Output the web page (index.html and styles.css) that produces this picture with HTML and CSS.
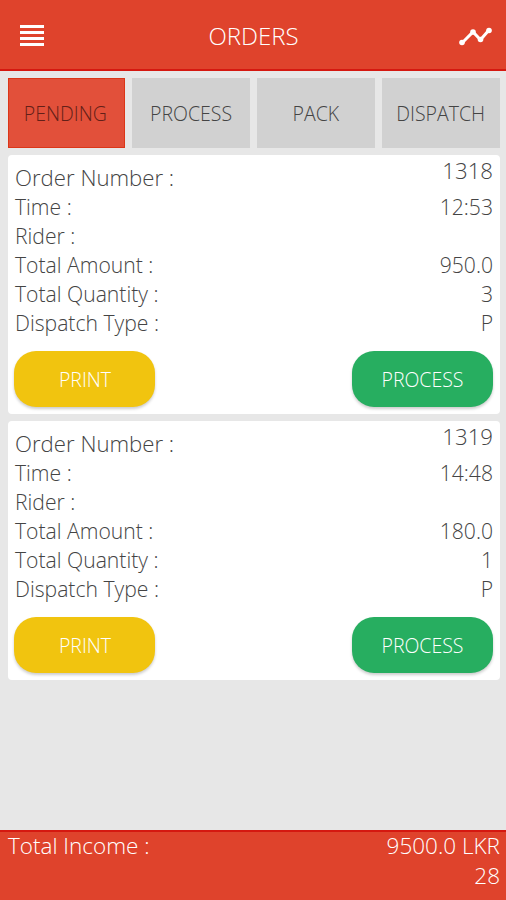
FILE: index.html
```html
<!DOCTYPE html>
<html lang="en">
<head>
<meta charset="utf-8">
<title>Orders</title>
<link rel="stylesheet" href="styles.css">
</head>
<body>
<header class="bar">
  <svg class="menu" viewBox="0 0 24 22"><path d="M0 1.500h24M0 7.500h24M0 13.500h24M0 19.500h24"/></svg>
  <h1>ORDERS</h1>
  <svg class="chart" viewBox="0 0 34 22"><path d="M3 18L14 7L21.500 14.800L30 5"/><circle cx="3" cy="17.500" r="2.800"/><circle cx="14" cy="7" r="2.800"/><circle cx="21.500" cy="14.500" r="2.800"/><circle cx="30" cy="5.500" r="2.800"/></svg>
</header>
<nav class="tabs">
  <button class="tab active"><span>PENDING</span></button>
  <button class="tab"><span>PROCESS</span></button>
  <button class="tab"><span>PACK</span></button>
  <button class="tab"><span>DISPATCH</span></button>
</nav>
<main>
  <section class="card">
    <div class="row first"><span>Order Number :</span><span class="value">1318</span></div>
    <div class="row"><span>Time :</span><span>12:53</span></div>
    <div class="row"><span>Rider :</span></div>
    <div class="row"><span>Total Amount :</span><span>950.0</span></div>
    <div class="row"><span>Total Quantity :</span><span>3</span></div>
    <div class="row"><span>Dispatch Type :</span><span>P</span></div>
    <div class="actions"><button class="action print">PRINT</button><button class="action process">PROCESS</button></div>
  </section>
  <section class="card">
    <div class="row first"><span>Order Number :</span><span class="value">1319</span></div>
    <div class="row"><span>Time :</span><span>14:48</span></div>
    <div class="row"><span>Rider :</span></div>
    <div class="row"><span>Total Amount :</span><span>180.0</span></div>
    <div class="row"><span>Total Quantity :</span><span>1</span></div>
    <div class="row"><span>Dispatch Type :</span><span>P</span></div>
    <div class="actions"><button class="action print">PRINT</button><button class="action process">PROCESS</button></div>
  </section>
</main>
<footer>
  <div class="total"><span>Total Income :</span><span>9500.0 LKR</span></div>
  <div class="total end"><span>28</span></div>
</footer>
</body>
</html>
```
FILE: styles.css
```css
* { box-sizing: border-box; }
body {
  margin: 0;
  height: 900px;
  display: flex;
  flex-direction: column;
  overflow: hidden;
  background: #e7e7e7;
  color: #444;
  font-family: "Open Sans", sans-serif;
  font-weight: 300;
}
.bar {
  height: 71px;
  flex: none;
  display: flex;
  align-items: center;
  justify-content: space-between;
  padding: 3px 13px 0 20px;
  background: #df432c;
  border-bottom: 2px solid #d51810;
  color: #fff;
}
h1 { margin: 0 0 0 4px; font-size: 24px; font-weight: 300; line-height: 32px; }
.menu { width: 24px; height: 22px; fill: none; stroke: #fff; stroke-width: 3; }
.chart { width: 34px; height: 22px; fill: #fff; }
.chart path { fill: none; stroke: #fff; stroke-width: 3; }
.tabs { display: grid; grid-template-columns: repeat(4, 1fr); gap: 7px; padding: 7px 6.5px 0 7.5px; }
button { border: 0; padding: 0; font: inherit; }
.tab { height: 70px; background: #d1d1d1; color: #444; font-size: 19.500px; }
.active { padding-right: 2px; background: #e2503a; border: 1px solid #dc3618; color: #632018; }
main { flex: 1; display: flex; flex-direction: column; gap: 7px; padding: 7px 6px 0 8px; }
.card { height: 259px; padding: 6px 7px 7px 6px; background: #fff; border-radius: 4px; }
.row { height: 29px; display: flex; justify-content: space-between; padding-left: 1px; line-height: 29px; font-size: 21.150px; }
.first { height: 31px; line-height: 34px; font-size: 22.200px; }
.value { line-height: 20px; }
.actions { display: flex; justify-content: space-between; margin-top: 14px; }
.action { width: 141px; height: 56px; border-radius: 22px; color: #fff; font-size: 19.500px; box-shadow: 0 2px 3px #0003; }
.print { padding-left: 1px; background: #f1c40f; }
.process { background: #27ae60; }
footer { height: 70px; flex: none; border-top: 2px solid #d51810; padding: 0 6px 0 8px; background: #df432c; color: #fff; font-size: 22.500px; }
.total { display: flex; justify-content: space-between; height: 30px; line-height: 28px; }
.end { justify-content: flex-end; }
```
